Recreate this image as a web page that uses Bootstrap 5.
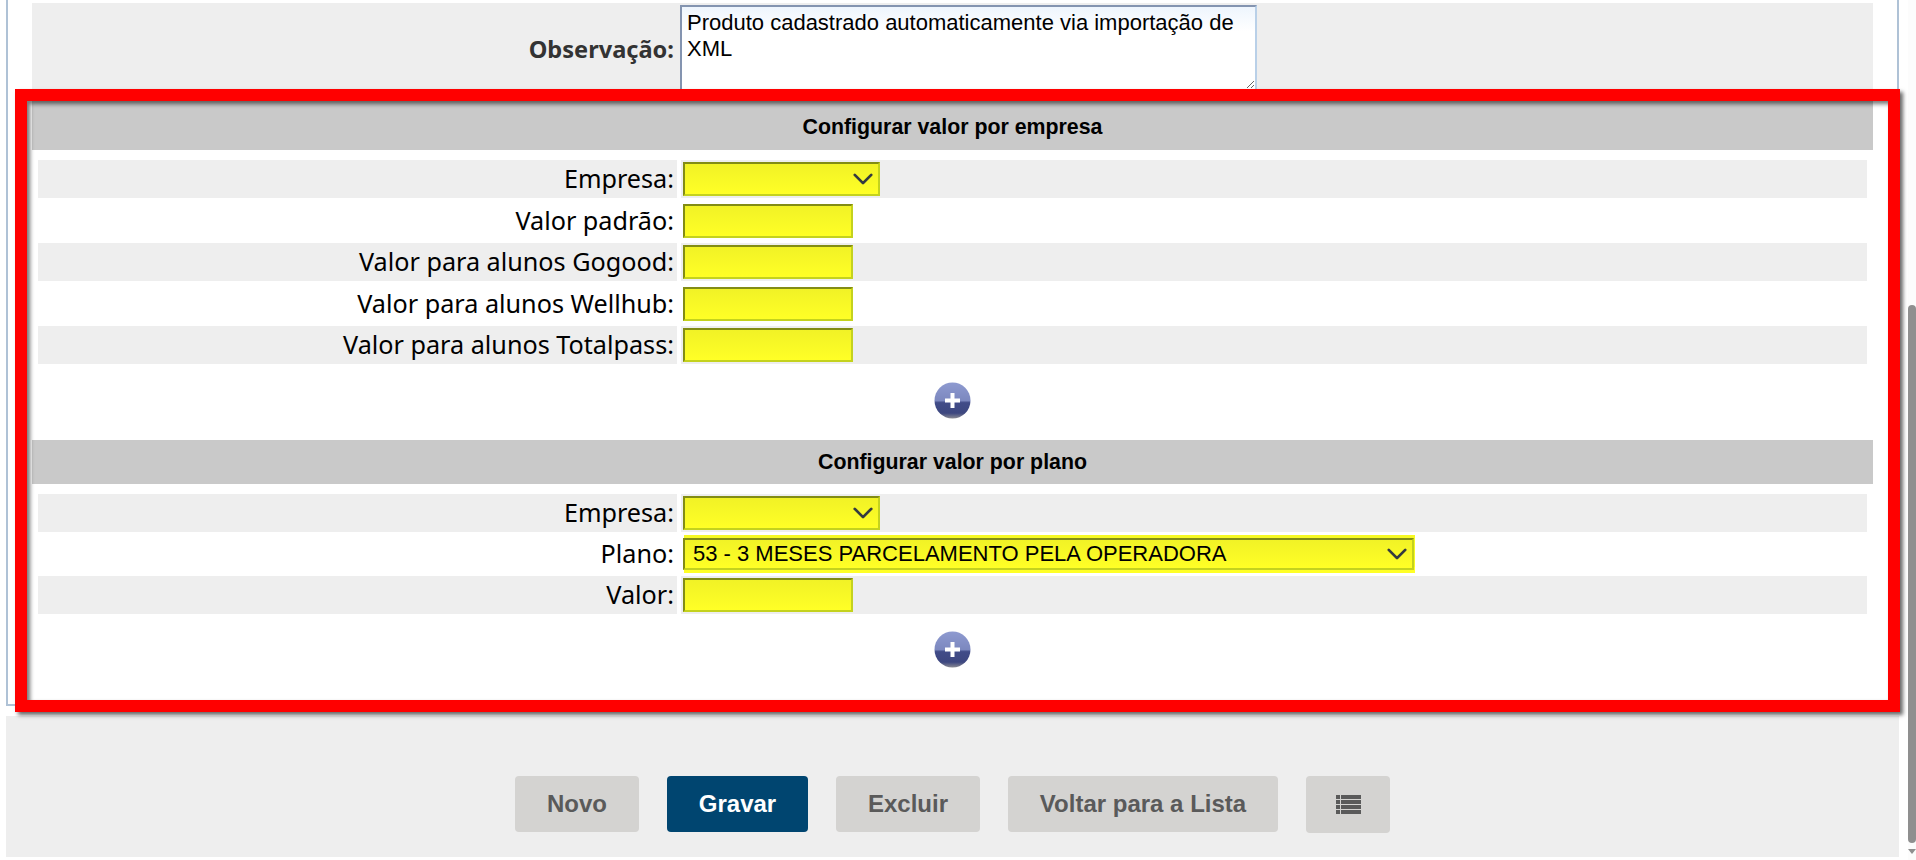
<!DOCTYPE html>
<html lang="pt-BR">
<head>
<meta charset="utf-8">
<title>Produto</title>
<link rel="stylesheet" href="https://cdn.jsdelivr.net/npm/bootstrap@5.3.0/dist/css/bootstrap.min.css">
<style>
html,body{height:860px;overflow:hidden;background:#fff}
body{font-family:"Noto Sans",sans-serif;color:#000}
.page-shell{height:860px;position:relative}
.content-col{width:1908px;flex:none}
.panel-box{margin-left:6px;width:1893px;height:706px;border:2px solid #afc2d6;border-top:0;padding:3px 24px 0 24px}
.obs-row{height:97px;background:#eee;grid-template-columns:644px 1fr;column-gap:4px}
.obs-label{font-weight:700;color:#333;font-size:23.6px;text-align:right;padding-top:28px;padding-right:2px;white-space:nowrap;line-height:36px}
.obs-area{width:577px;height:86px;margin-top:2px;border:2px solid;border-color:#8494b0 #b9d0e8 #b9d0e8 #8494b0;border-radius:0;padding:3px 5px;font:22px/26px "Liberation Sans",sans-serif;color:#000;background:linear-gradient(#eef5fd,#fff 30%);box-shadow:none;min-height:0}
.sect-head{background:#c9c9c9;font:700 21.33px/24px "Liberation Sans",sans-serif;text-align:center;color:#000}
.sect-a{height:50px;padding-top:15px}
.sect-b{height:44px;padding-top:10px}
.rows-box{padding:10px 6px 0}
.form-line{display:grid;grid-template-columns:639px 1fr;column-gap:4px;height:38px;margin-bottom:3.5px}
.rows-box.tight .form-line{margin-bottom:3px}
.form-line.shade>div{background:#eee}
.line-label{font-size:25.2px;text-align:right;line-height:36px;padding-right:3px;white-space:nowrap}
.line-field{padding:2px}
.yellow-input,.yellow-select{display:block;height:34px;border:2px solid;border-color:#828c14 #c4d21e #c4d21e #828c14;border-radius:0;padding:0 7px;color:#000;box-shadow:none;font:22px/28px "Liberation Sans",sans-serif;background-color:#f7f922}
.yellow-input{width:170px;background-image:linear-gradient(#f1f226,#ffff26)}
.yellow-select{width:197px;background-image:var(--bs-form-select-bg-img),linear-gradient(#f1f226,#ffff26);background-position:right 4px center,0 0;background-size:22px 22px,auto;background-repeat:no-repeat}
.yellow-select.wide{width:731px;height:32px;margin-top:1px;padding:0 8px;line-height:26px;box-shadow:1px -3px 0 #f6f924,1px 3px 0 #ffff26}
.plus-wrap{height:72.5px;padding-top:14px}
.plus-wrap.second{height:82px;padding-top:14px}
.plus-disc{width:37px;height:37px;display:block}
.foot-bar{margin-left:6px;width:1893px;height:141px;margin-top:10px;background:#eee;padding:60px 0 0 0;gap:28px}
.act-btn{height:56px;border:0;border-radius:4px;background:#d4d3d1;color:#5a5a5a;font:700 24px/56px "Liberation Sans",sans-serif;padding:0}
.act-btn.prime{background:#004570;color:#fff}
.act-btn.icon-only{width:84px;height:57px}
.act-btn.n1{width:124px}
.act-btn.n2{width:141px}
.act-btn.n3{width:144px}
.act-btn.n4{width:270px}
.scroll-rail{width:8px;flex:none;background:#fcfcfc;padding-top:305px}
.scroll-thumb{height:538px;background:#8f8f8f;border-radius:4px}
.scroll-down{width:0;height:0;margin-top:6px;border-left:4px solid transparent;border-right:4px solid transparent;border-top:5px solid #8f8f8f}
.red-frame{position:absolute;left:15px;top:89px;width:1885px;height:623px;border:12px solid #f00;box-shadow:3px 3px 4px rgba(0,0,0,.6),inset 3px 3px 4px rgba(0,0,0,.55);pointer-events:none}
</style>
</head>
<body>
<div class="page-shell d-flex">
  <div class="content-col">
    <div class="panel-box">
      <div class="obs-row d-grid">
        <div class="obs-label">Observação:</div>
        <div><textarea class="form-control obs-area" readonly>Produto cadastrado automaticamente via importação de XML</textarea></div>
      </div>
      <div class="sect-head sect-a">Configurar valor por empresa</div>
      <div class="rows-box">
        <div class="form-line shade"><div class="line-label">Empresa:</div><div class="line-field"><select class="form-select yellow-select"><option></option></select></div></div>
        <div class="form-line"><div class="line-label">Valor padrão:</div><div class="line-field"><input class="form-control yellow-input" type="text"></div></div>
        <div class="form-line shade"><div class="line-label">Valor para alunos Gogood:</div><div class="line-field"><input class="form-control yellow-input" type="text"></div></div>
        <div class="form-line"><div class="line-label">Valor para alunos Wellhub:</div><div class="line-field"><input class="form-control yellow-input" type="text"></div></div>
        <div class="form-line shade"><div class="line-label">Valor para alunos Totalpass:</div><div class="line-field"><input class="form-control yellow-input" type="text"></div></div>
      </div>
      <div class="plus-wrap d-flex justify-content-center align-items-start">
        <svg class="plus-disc" viewBox="0 0 37 37" role="img" aria-label="Adicionar"><defs><linearGradient id="pg1" x1="0" y1="0" x2="0" y2="1"><stop offset="0" stop-color="#8e9ad0"/><stop offset=".5" stop-color="#7c88bf"/><stop offset=".56" stop-color="#414c88"/><stop offset=".85" stop-color="#3d4780"/><stop offset="1" stop-color="#8a8a92"/></linearGradient></defs><circle cx="18.5" cy="18.5" r="18" fill="url(#pg1)"/><rect x="16.5" y="11" width="4" height="15" fill="#fff"/><rect x="11" y="16.5" width="15" height="4" fill="#fff"/></svg>
      </div>
      <div class="sect-head sect-b">Configurar valor por plano</div>
      <div class="rows-box tight">
        <div class="form-line shade"><div class="line-label">Empresa:</div><div class="line-field"><select class="form-select yellow-select"><option></option></select></div></div>
        <div class="form-line"><div class="line-label">Plano:</div><div class="line-field"><select class="form-select yellow-select wide"><option>53 - 3 MESES PARCELAMENTO PELA OPERADORA</option></select></div></div>
        <div class="form-line shade"><div class="line-label">Valor:</div><div class="line-field"><input class="form-control yellow-input" type="text"></div></div>
      </div>
      <div class="plus-wrap second d-flex justify-content-center align-items-start">
        <svg class="plus-disc" viewBox="0 0 37 37" role="img" aria-label="Adicionar"><defs><linearGradient id="pg2" x1="0" y1="0" x2="0" y2="1"><stop offset="0" stop-color="#8e9ad0"/><stop offset=".5" stop-color="#7c88bf"/><stop offset=".56" stop-color="#414c88"/><stop offset=".85" stop-color="#3d4780"/><stop offset="1" stop-color="#8a8a92"/></linearGradient></defs><circle cx="18.5" cy="18.5" r="18" fill="url(#pg2)"/><rect x="16.5" y="11" width="4" height="15" fill="#fff"/><rect x="11" y="16.5" width="15" height="4" fill="#fff"/></svg>
      </div>
    </div>
    <div class="foot-bar d-flex justify-content-center align-items-start">
      <button class="btn act-btn n1" type="button">Novo</button>
      <button class="btn act-btn prime n2" type="button">Gravar</button>
      <button class="btn act-btn n3" type="button">Excluir</button>
      <button class="btn act-btn n4" type="button">Voltar para a Lista</button>
      <button class="btn act-btn icon-only d-flex align-items-center justify-content-center" type="button" aria-label="Lista">
        <svg width="25" height="19" viewBox="0 0 25 19" fill="#5a5a5a"><rect x="0" y="0" width="4" height="4"/><rect x="5" y="0" width="20" height="4"/><rect x="0" y="5" width="4" height="4"/><rect x="5" y="5" width="20" height="4"/><rect x="0" y="10" width="4" height="4"/><rect x="5" y="10" width="20" height="4"/><rect x="0" y="15" width="4" height="4"/><rect x="5" y="15" width="20" height="4"/></svg>
      </button>
    </div>
  </div>
  <div class="scroll-rail"><div class="scroll-thumb"></div><div class="scroll-down"></div></div>
  <div class="red-frame"></div>
</div>
<script src="https://cdn.jsdelivr.net/npm/bootstrap@5.3.0/dist/js/bootstrap.bundle.min.js"></script>
</body>
</html>
